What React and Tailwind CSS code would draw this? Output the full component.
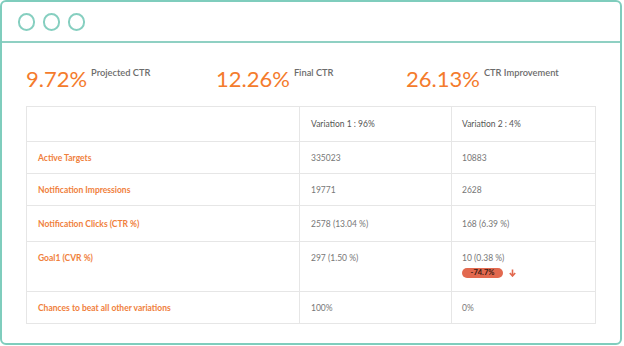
export default function App() {
  const rows = [
    { label: "Active Targets", v1: "335023", v2: "10883", h: "h-[32px]" },
    { label: "Notification Impressions", v1: "19771", v2: "2628", h: "h-[32px]" },
    { label: "Notification Clicks (CTR %)", v1: "2578 (13.04 %)", v2: "168 (6.39 %)", h: "h-[36px]" },
  ];
  const metrics = [
    { value: "9.72%", label: "Projected CTR" },
    { value: "12.26%", label: "Final CTR" },
    { value: "26.13%", label: "CTR Improvement" },
  ];
  return (
    <div className="w-[624px] h-[346px] bg-white" style={{ fontFamily: "Lato, 'Open Sans', sans-serif" }}>
      <div className="w-[622px] h-[345px] border-2 border-[#7fcdbd] rounded-[6px] flex flex-col overflow-hidden">
        <div className="h-[41px] shrink-0 border-b-2 border-[#8fd0c3] flex items-center gap-[8px] pl-[16px] pt-[1px]">
          <div className="w-[17px] h-[18px] rounded-full border-2 border-[#86cfc0]" />
          <div className="w-[17px] h-[18px] rounded-full border-2 border-[#86cfc0]" />
          <div className="w-[17px] h-[18px] rounded-full border-2 border-[#86cfc0]" />
        </div>
        <div className="pl-[24px] pt-[23px]">
          <div className="flex">
            {metrics.map((m) => (
              <div key={m.label} className="w-[190px] flex items-start">
                <span className="text-[22px] leading-[26px] text-[#f47b2c]">{m.value}</span>
                <span className="ml-[4px] mt-[1px] text-[9.3px] leading-[12px] font-semibold text-[#6b6b6b]">{m.label}</span>
              </div>
            ))}
          </div>
          <table className="mt-[14px] border-collapse border border-[#e6e6e6] text-[8.5px] leading-[10px]">
            <tbody>
              <tr className="h-[35px]">
                <td className="w-[273px] border border-[#e6e6e6]"></td>
                <td className="w-[152px] border border-[#e6e6e6] pl-[11px] text-[#555]">Variation 1 : 96%</td>
                <td className="w-[144px] border border-[#e6e6e6] pl-[10px] text-[#555]">Variation 2 : 4%</td>
              </tr>
              {rows.map((r) => (
                <tr key={r.label} className={r.h}>
                  <td className="border border-[#e6e6e6] pl-[11px] font-bold text-[#f0803c]">{r.label}</td>
                  <td className="border border-[#e6e6e6] pl-[11px] text-[#777]">{r.v1}</td>
                  <td className="border border-[#e6e6e6] pl-[10px] text-[#777]">{r.v2}</td>
                </tr>
              ))}
              <tr className="h-[50px]">
                <td className="border border-[#e6e6e6] pl-[11px] pt-[11px] align-top font-bold text-[#f0803c]">Goal1 (CVR %)</td>
                <td className="border border-[#e6e6e6] pl-[11px] pt-[11px] align-top text-[#777]">297 (1.50 %)</td>
                <td className="border border-[#e6e6e6] pl-[10px] pt-[11px] align-top text-[#777]">
                  <div>10 (0.38 %)</div>
                  <div className="mt-[5px] flex items-center">
                    <span className="h-[10px] w-[41px] rounded-full bg-[#e2694f] text-[#3a1a12] font-bold text-[7.5px] leading-[10px] flex items-center justify-center">-74.7%</span>
                    <svg className="ml-[6px]" width="7" height="8" viewBox="0 0 7 8">
                      <path d="M3.5 0.5 V6.5 M0.8 4 L3.5 7 L6.2 4" stroke="#e2694f" strokeWidth="1.6" fill="none" />
                    </svg>
                  </div>
                </td>
              </tr>
              <tr className="h-[32px]">
                <td className="border border-[#e6e6e6] pl-[11px] font-bold text-[#f0803c]">Chances to beat all other variations</td>
                <td className="border border-[#e6e6e6] pl-[11px] text-[#777]">100%</td>
                <td className="border border-[#e6e6e6] pl-[10px] text-[#777]">0%</td>
              </tr>
            </tbody>
          </table>
        </div>
      </div>
    </div>
  );
}
